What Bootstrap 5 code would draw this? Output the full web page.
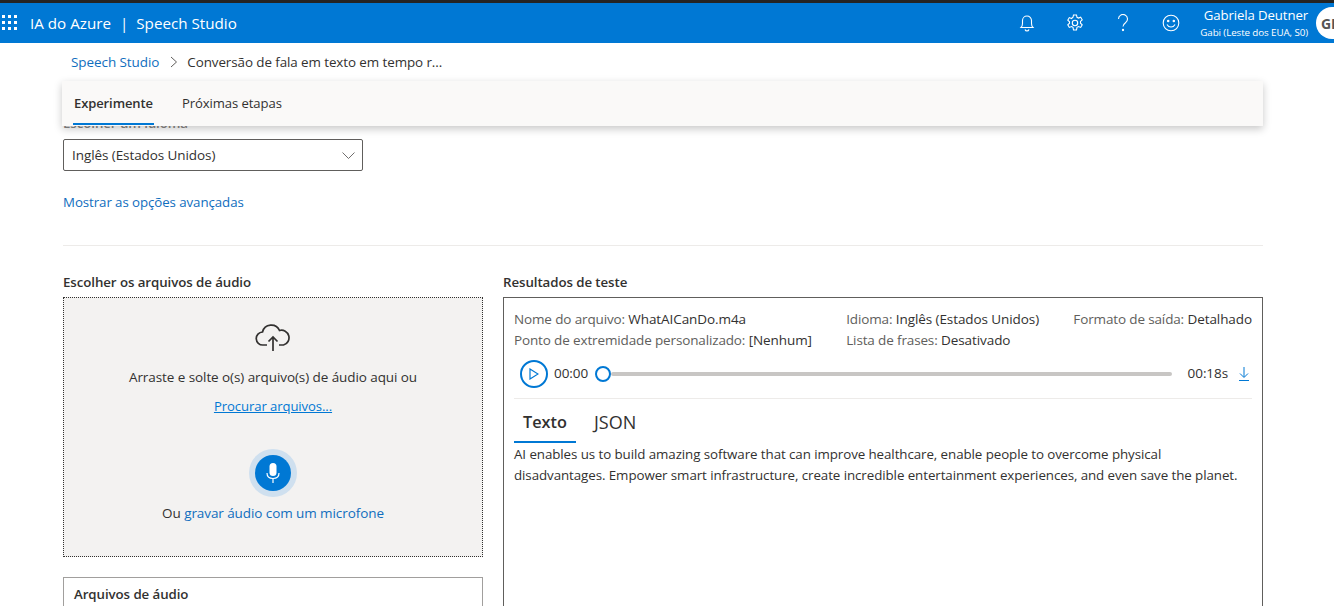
<!DOCTYPE html>
<html lang="pt-BR">
<head>
<meta charset="utf-8">
<title>Speech Studio</title>
<link href="https://cdn.jsdelivr.net/npm/bootstrap@5.3.0/dist/css/bootstrap.min.css" rel="stylesheet">
<style>
html,body{height:606px;overflow:hidden;}
body{font-family:"Open Sans","Noto Sans","Liberation Sans",sans-serif;font-size:13.5px;color:#323130;background:#fff;letter-spacing:-.08px;}
a{text-decoration:none;color:#106ebe;}
.topstrip{height:3px;background:#252423;}
.appbar{height:40px;background:#0078d4;color:#fff;padding-left:2px;}
.waffle{width:16px;height:16px;margin-right:12px;}
.brand{font-size:15.2px;letter-spacing:0;}
.brand-sep{margin:0 8px 0 9px;}
.bar-ico{width:48px;display:flex;justify-content:center;}
.userbox{text-align:right;line-height:1;margin-left:5px;margin-right:8px;}
.username{font-size:13.2px;letter-spacing:-.1px;margin-top:0;}
.usersub{font-size:9.8px;margin-top:6px;letter-spacing:-.1px;}
.avatar{width:32px;height:32px;border-radius:50%;background:#fff;color:#555;font-weight:700;font-size:14px;display:flex;align-items:center;padding-left:5px;margin-right:-14px;flex:none;}
.crumbs{height:38px;padding-left:71px;}
.crumb-sep{margin:0 9px 0 11px;}
.crumb-current{font-size:13.4px;}
.tabpanel{position:relative;z-index:2;height:45px;margin:0 71px 0 62px;background:#faf9f8;box-shadow:0 3px 8px rgba(0,0,0,.22);padding-left:11px;gap:28px;font-size:13.1px;}
.tabitem{height:44px;line-height:45px;color:#323130;}
.tabitem.on{font-weight:600;font-size:13px;letter-spacing:-.1px;border-bottom:2px solid #0078d4;padding:0 1px;}
.mainarea{padding:0 71px 0 63px;}
.hiddenlabel{font-weight:600;font-size:13.3px;color:#8a8886;margin-top:-12px;height:25px;line-height:18px;}
.langselect{width:300px;height:32px;border:1px solid #605e5c;border-radius:2px;padding:0 7px 0 8px;}
.advlink{display:block;margin-top:21px;line-height:20px;font-size:13.3px;}
.divider{border-top:1px solid #edebe9;margin-top:33px;}
.columns{margin-top:26px;column-gap:20px;height:334px;overflow:hidden;}
.sectitle{font-weight:600;font-size:13.3px;line-height:20px;margin-bottom:5px;}
.leftcol{width:420px;flex:none;}
.dropzone{height:260px;border:1px dotted #323130;background:#f3f2f1;text-align:center;padding-top:26px;}
.dropline{line-height:20px;margin-top:15px;}
.browse{font-size:13.1px;text-decoration:underline;display:block;line-height:20px;margin-top:9px;color:#0078d4;}
.micring{width:48px;height:48px;border-radius:50%;background:#cfe0ef;margin:33px auto 0;display:flex;align-items:center;justify-content:center;}
.micdisc{width:36px;height:36px;border-radius:50%;background:#0078d4;display:flex;align-items:center;justify-content:center;}
.recline{line-height:20px;margin-top:6px;}
.filesbox{margin-top:20px;height:60px;border:1px solid #a19f9d;padding:6px 10px;font-weight:600;font-size:13.3px;line-height:20px;}
.resultbox{border:1px solid #605e5c;height:320px;padding:11px 10px 0;}
.metarow{line-height:21px;}
.metakey{color:#605e5c;letter-spacing:-.14px;}
.playerrow{height:29px;margin-top:8px;padding-left:6px;}
.playbtn{width:28px;height:28px;border:2px solid #0078d4;border-radius:50%;display:flex;align-items:center;justify-content:center;flex:none;margin-right:6px;}
.thumb{width:16px;height:16px;border:2px solid #0078d4;border-radius:50%;background:#fff;flex:none;margin-left:7px;}
.track{height:4px;background:#c8c6c4;flex:1;border-radius:2px;margin-right:16px;}
.dlicon{margin:0 2px 0 10px;}
.rowline{border-top:1px solid #edebe9;margin-top:10px;}
.resulttabs{height:44px;margin-top:1px;}
.rtab{font-size:18px;height:43px;line-height:44px;padding:0 9px;margin-right:9px;letter-spacing:0;}
.rtab.on{font-weight:600;font-size:16.3px;border-bottom:2px solid #0078d4;}
.transcript{font-size:13.35px;line-height:21px;}
</style>
</head>
<body>
<div class="topstrip"></div>
<header class="appbar d-flex align-items-center">
  <svg class="waffle" viewBox="0 0 16 16" fill="#fff"><g><rect x="0" y="0" width="3" height="3"/><rect x="6" y="0" width="3" height="3"/><rect x="12" y="0" width="3" height="3"/><rect x="0" y="6" width="3" height="3"/><rect x="6" y="6" width="3" height="3"/><rect x="12" y="6" width="3" height="3"/><rect x="0" y="12" width="3" height="3"/><rect x="6" y="12" width="3" height="3"/><rect x="12" y="12" width="3" height="3"/></g></svg>
  <div class="brand">IA do Azure<span class="brand-sep">|</span>Speech Studio</div>
  <div class="ms-auto d-flex align-items-center">
    <span class="bar-ico"><svg width="16" height="18" viewBox="0 0 16 18" fill="none" stroke="#fff" stroke-width="1.1"><path d="M2 13.5c1-1 1.5-2 1.5-4V6.5a4.5 4.5 0 0 1 9 0v3c0 2 .5 3 1.5 4z"/><path d="M6 15.5c.4 1 1 1.5 2 1.5s1.600-.5 2-1.500"/></svg></span>
    <span class="bar-ico"><svg width="18" height="18" viewBox="0 0 18 18" fill="none" stroke="#fff" stroke-width="1.100"><path d="M7.500 1h3l.5 2.300 1.500.8 2.200-.9 1.500 2.600-1.700 1.600v1.800l1.700 1.600-1.500 2.600-2.200-.9-1.500.8-.5 2.700h-3l-.5-2.700-1.500-.8-2.200.9-1.500-2.600 1.700-1.600V7.800L1.800 6.200l1.500-2.600 2.200.9L7 3.300z"/><circle cx="9" cy="9" r="2.700"/></svg></span>
    <span class="bar-ico"><svg width="12" height="18" viewBox="0 0 12 18" fill="none" stroke="#fff" stroke-width="1.100"><path d="M1.500 5a4.500 4.500 0 1 1 7 3.700C7 9.800 6 10.600 6 12.500"/><circle cx="6" cy="16" r=".6" fill="#fff"/></svg></span>
    <span class="bar-ico"><svg width="18" height="18" viewBox="0 0 18 18" fill="none" stroke="#fff" stroke-width="1.100"><circle cx="9" cy="9" r="7.800"/><path d="M5 10.500c.8 1.600 2.200 2.500 4 2.500s3.200-.9 4-2.500"/><circle cx="6.200" cy="7" r=".7" fill="#fff"/><circle cx="11.800" cy="7" r=".7" fill="#fff"/></svg></span>
    <div class="userbox"><div class="username">Gabriela Deutner</div><div class="usersub">Gabi (Leste dos EUA, S0)</div></div>
    <div class="avatar">GI</div>
  </div>
</header>
<nav class="crumbs d-flex align-items-center">
  <a href="#">Speech Studio</a>
  <svg class="crumb-sep" width="8" height="12" viewBox="0 0 8 12" fill="none" stroke="#605e5c"><path d="M1 1l5.500 5L1 11"/></svg>
  <span class="crumb-current">Conversão de fala em texto em tempo r...</span>
</nav>
<div class="tabpanel d-flex">
  <div class="tabitem on">Experimente</div>
  <div class="tabitem">Próximas etapas</div>
</div>
<main class="mainarea">
  <div class="hiddenlabel">Escolher um idioma</div>
  <div class="langselect d-flex align-items-center justify-content-between">
    <span>Inglês (Estados Unidos)</span>
    <svg width="13" height="7" viewBox="0 0 13 7" fill="none" stroke="#605e5c" stroke-width=".9"><path d="M.5.5l6 6 6-6"/></svg>
  </div>
  <a class="advlink" href="#">Mostrar as opções avançadas</a>
  <div class="divider"></div>
  <div class="columns d-flex">
    <section class="leftcol">
      <div class="sectitle">Escolher os arquivos de áudio</div>
      <div class="dropzone">
        <svg width="36" height="28" viewBox="0 0 36 28" fill="none" stroke="#323130" stroke-width="1.700"><path d="M12 21H8a6.500 6.500 0 0 1-.5-13A9 9 0 0 1 24.500 6.500 7.300 7.300 0 0 1 28.500 21H24"/><path d="M18 27V13M13.500 17.500L18 13l4.500 4.500"/></svg>
        <div class="dropline">Arraste e solte o(s) arquivo(s) de áudio aqui ou</div>
        <a class="browse" href="#">Procurar arquivos...</a>
        <div class="micring"><div class="micdisc"><svg width="14" height="20" viewBox="0 0 14 20" fill="none" stroke="#fff"><rect x="3.500" y="0" width="7" height="13" rx="3.500" fill="#fff" stroke="none"/><path d="M1 10c0 3.500 2.500 5.500 6 5.500s6-2 6-5.500M7 15.500V20" stroke-width="1.200"/></svg></div></div>
        <div class="recline">Ou <a href="#">gravar áudio com um microfone</a></div>
      </div>
      <div class="filesbox">Arquivos de áudio</div>
    </section>
    <section class="flex-grow-1">
      <div class="sectitle">Resultados de teste</div>
      <div class="resultbox">
        <div class="d-flex justify-content-between">
          <div class="metarow"><div><span class="metakey">Nome do arquivo:</span> WhatAICanDo.m4a</div><div><span class="metakey">Ponto de extremidade personalizado:</span> [Nenhum]</div></div>
          <div class="metarow"><div><span class="metakey">Idioma:</span> Inglês (Estados Unidos)</div><div><span class="metakey">Lista de frases:</span> Desativado</div></div>
          <div class="metarow"><div><span class="metakey">Formato de saída:</span> Detalhado</div></div>
        </div>
        <div class="playerrow d-flex align-items-center">
          <div class="playbtn"><svg width="10" height="12" viewBox="0 0 10 12" fill="none" stroke="#0078d4" stroke-width="1.200"><path d="M1 1l8 5-8 5z"/></svg></div>
          <span>00:00</span>
          <div class="thumb"></div>
          <div class="track"></div>
          <span>00:18s</span>
          <svg class="dlicon" width="12" height="14" viewBox="0 0 12 14" fill="none" stroke="#0078d4"><path d="M6 0v10M2 6.500L6 10.500l4-4M1 13.500h10"/></svg>
        </div>
        <div class="rowline"></div>
        <div class="resulttabs d-flex">
          <div class="rtab on">Texto</div>
          <div class="rtab">JSON</div>
        </div>
        <div class="transcript">AI enables us to build amazing software that can improve healthcare, enable people to overcome physical<br>disadvantages. Empower smart infrastructure, create incredible entertainment experiences, and even save the planet.</div>
      </div>
    </section>
  </div>
</main>
<script src="https://cdn.jsdelivr.net/npm/bootstrap@5.3.0/dist/js/bootstrap.bundle.min.js"></script>
</body>
</html>
